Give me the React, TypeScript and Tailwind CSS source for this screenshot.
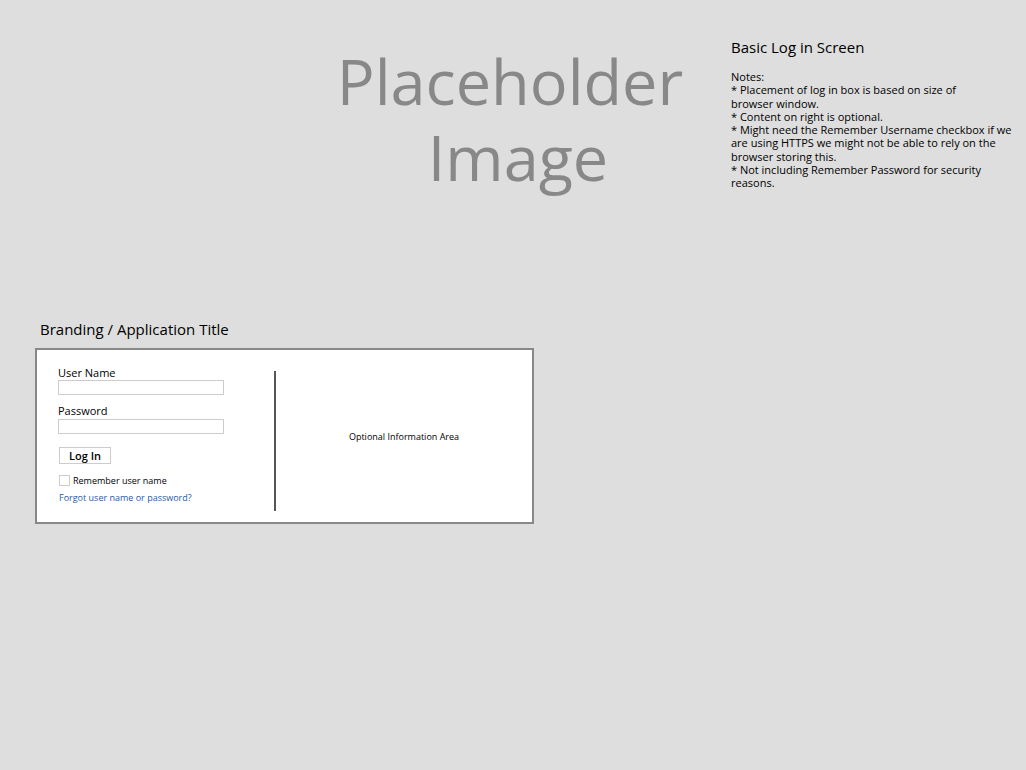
import React from "react";

export default function App() {
  return (
    <div
      className="w-[1026px] h-[770px] bg-[#dedede] text-black overflow-hidden"
      style={{ fontFamily: '"Open Sans", "Noto Sans", sans-serif' }}
    >
      <div className="flex items-start">
        <div className="ml-[330px] mt-[43px] w-[360px] text-center text-[63px] leading-[76px] text-[#888888]">
          <div>Placeholder</div>
          <div className="pl-[16px]">Image</div>
        </div>
        <div className="ml-[41px] mt-[37px] w-[290px]">
          <div className="text-[15px] leading-[20px]">Basic Log in Screen</div>
          <div className="mt-[13px] text-[11px] leading-[13.3px]">
            Notes:
            <br />* Placement of log in box is based on size of
            <br />
            browser window.
            <br />* Content on right is optional.
            <br />* Might need the Remember Username checkbox if we are using HTTPS we might not be able to rely on the browser storing this.
            <br />* Not including Remember Password for security reasons.
          </div>
        </div>
      </div>

      <div className="ml-[35px] mt-[124px]">
        <div className="ml-[5px] text-[15px] leading-[20px]">Branding / Application Title</div>
        <div className="mt-[9px] w-[499px] h-[176px] border-2 border-[#888888] bg-white flex">
          <div className="w-[237px] pl-[21px] pt-[16px] flex flex-col">
            <div className="text-[11px] leading-[13px]">User Name</div>
            <div className="mt-[1px] w-[166px] h-[15px] border border-[#cccccc] bg-white" />
            <div className="mt-[9px] text-[11px] leading-[13px]">Password</div>
            <div className="mt-[2px] w-[166px] h-[15px] border border-[#cccccc] bg-white" />
            <div className="mt-[13px] ml-[1px] w-[52px] h-[17px] border border-[#cccccc] bg-white flex items-center justify-center text-[11px] font-semibold leading-none">
              Log In
            </div>
            <div className="mt-[11px] flex items-center">
              <div className="ml-[1px] w-[11px] h-[11px] border border-[#cccccc] bg-white" />
              <span className="ml-[3px] text-[9px] leading-[11px]">Remember user name</span>
            </div>
            <div className="mt-[6px] ml-[1px] text-[9px] leading-[11px] text-[#1f5aa8]">
              Forgot user name or password?
            </div>
          </div>
          <div className="w-[2px] mt-[21px] mb-[11px] bg-[#555555]" />
          <div className="flex-1 flex items-center justify-center pt-[2px] text-[9px]">
            Optional Information Area
          </div>
        </div>
      </div>
    </div>
  );
}
